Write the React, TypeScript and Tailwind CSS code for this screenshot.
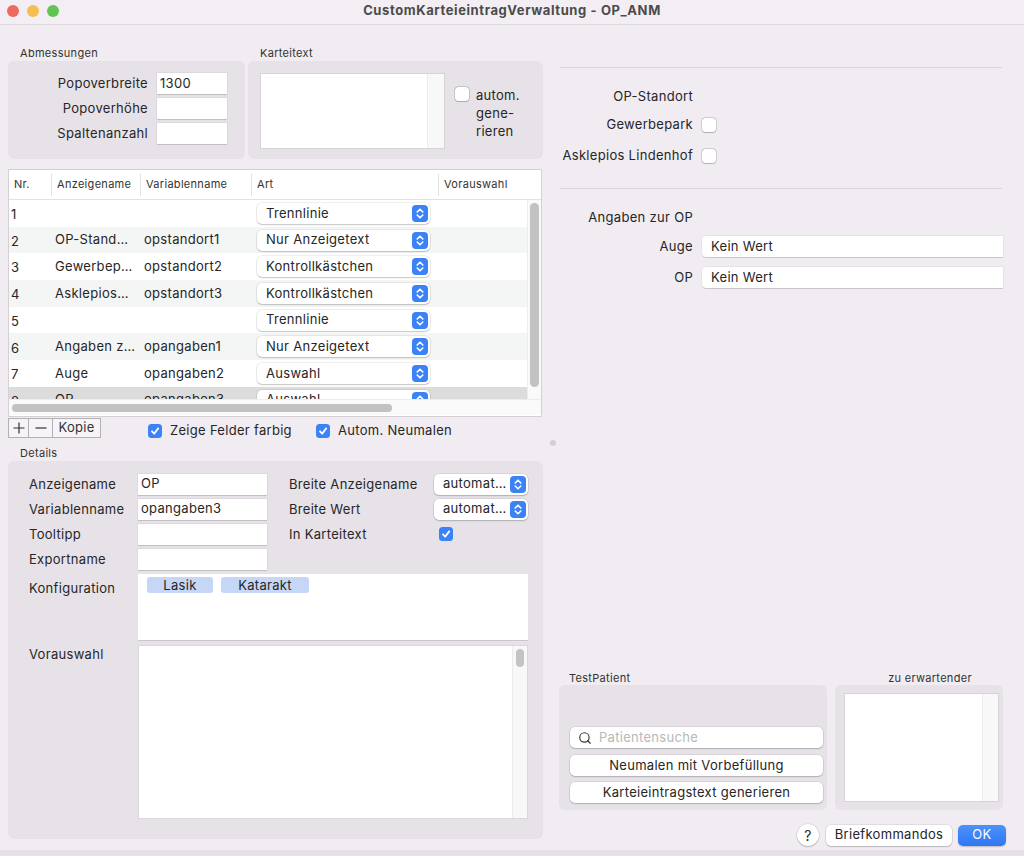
import { Search } from 'lucide-react';

type Row = { nr: string; name: string; variable: string; art: string };

const rows: Row[] = [
  { nr: '1', name: '', variable: '', art: 'Trennlinie' },
  { nr: '2', name: 'OP-Stand…', variable: 'opstandort1', art: 'Nur Anzeigetext' },
  { nr: '3', name: 'Gewerbep…', variable: 'opstandort2', art: 'Kontrollkästchen' },
  { nr: '4', name: 'Asklepios…', variable: 'opstandort3', art: 'Kontrollkästchen' },
  { nr: '5', name: '', variable: '', art: 'Trennlinie' },
  { nr: '6', name: 'Angaben z…', variable: 'opangaben1', art: 'Nur Anzeigetext' },
  { nr: '7', name: 'Auge', variable: 'opangaben2', art: 'Auswahl' },
  { nr: '8', name: 'OP', variable: 'opangaben3', art: 'Auswahl' },
];

function Stepper() {
  return (
    <span className="flex h-[17px] w-[16px] shrink-0 items-center justify-center rounded-[4px] bg-[#3b82f6]">
      <svg width="10" height="13" viewBox="0 0 10 13" fill="none" stroke="white" strokeWidth="1.6" strokeLinecap="round" strokeLinejoin="round">
        <path d="M2.2 5 L5 2.2 L7.8 5" />
        <path d="M2.2 8 L5 10.8 L7.8 8" />
      </svg>
    </span>
  );
}

function Popup({ text, className = '' }: { text: string; className?: string }) {
  return (
    <div className={`flex h-[21px] items-center justify-between rounded-[5px] bg-white pl-[9px] pr-[2px] shadow-[0_0_0_0.5px_rgba(0,0,0,0.12),0_1px_1.5px_rgba(0,0,0,0.18)] ${className}`}>
      <span className="truncate">{text}</span>
      <Stepper />
    </div>
  );
}

function Checkbox({ checked = false }: { checked?: boolean }) {
  if (checked) {
    return (
      <span className="flex h-[14px] w-[14px] shrink-0 items-center justify-center rounded-[3.5px] bg-[#3b82f6]">
        <svg width="10" height="10" viewBox="0 0 10 10" fill="none" stroke="white" strokeWidth="1.8" strokeLinecap="round" strokeLinejoin="round">
          <path d="M2 5.3 L4.2 7.6 L8.2 2.4" />
        </svg>
      </span>
    );
  }
  return <span className="block h-[14px] w-[14px] shrink-0 rounded-[3.5px] bg-white shadow-[0_0_0_0.5px_rgba(0,0,0,0.25),0_0.5px_1px_rgba(0,0,0,0.15)]" />;
}

function Field({ value = '', className = '' }: { value?: string; className?: string }) {
  return (
    <div className={`flex h-[21px] items-center bg-white px-[3px] shadow-[0_0_0_0.5px_rgba(0,0,0,0.08),0_1px_0_rgba(0,0,0,0.12)] ${className}`}>
      {value}
    </div>
  );
}

function Button({ children, className = '' }: { children: React.ReactNode; className?: string }) {
  return (
    <div className={`flex h-[21px] items-center justify-center rounded-[5px] bg-white shadow-[0_0_0_0.5px_rgba(0,0,0,0.12),0_1px_1.5px_rgba(0,0,0,0.18)] ${className}`}>
      {children}
    </div>
  );
}

const cols = 'grid grid-cols-[42px_89px_111px_187px_1fr]';

export default function App() {
  return (
    <div className="flex h-[856px] w-[1024px] flex-col overflow-hidden bg-[#f0ecf1] font-['Inter',sans-serif] text-[13px] tracking-[0.3px] text-[#262626]">
      {/* Title bar */}
      <div className="grid h-[25px] shrink-0 grid-cols-[1fr_auto_1fr] items-center border-b border-[#dcd8dc] bg-[#f2eef3] pb-[3px]">
        <div className="flex gap-[8px] pl-[7px]">
          <span className="h-[12px] w-[12px] rounded-full bg-[#ee6a5f]" />
          <span className="h-[12px] w-[12px] rounded-full bg-[#f5bf4f]" />
          <span className="h-[12px] w-[12px] rounded-full bg-[#61c554]" />
        </div>
        <div className="font-bold tracking-[0.6px] text-[#4b4b4b]">CustomKarteieintragVerwaltung - OP_ANM</div>
        <div />
      </div>

      <div className="flex h-[825px] shrink-0 pl-[8px]">
        {/* Left column */}
        <div className="flex w-[535px] flex-col pt-[21px]">
          <div className="flex h-[14px] text-[11px] leading-[14px] text-[#333]">
            <span className="w-[240px] pl-[12px]">Abmessungen</span>
            <span className="pl-[12px]">Karteitext</span>
          </div>
          <div className="mt-[1px] flex h-[98px] gap-[3px]">
            <div className="flex w-[237px] flex-col gap-[4px] rounded-[6px] bg-[#e6e2e8] pt-[12px]">
              {[
                ['Popoverbreite', '1300'],
                ['Popoverhöhe', ''],
                ['Spaltenanzahl', ''],
              ].map(([label, value]) => (
                <div key={label} className="flex h-[21px] items-center">
                  <span className="w-[140px] text-right">{label}</span>
                  <Field value={value} className="ml-[9px] w-[70px]" />
                </div>
              ))}
            </div>
            <div className="flex w-[295px] rounded-[6px] bg-[#e6e2e8] pl-[12px] pt-[12px]">
              <div className="flex h-[76px] w-[185px] justify-end border border-[#d7d3d7] bg-white">
                <div className="w-[17px] border-l border-[#ececec] bg-[#f8f8f8]" />
              </div>
              <div className="ml-[10px] mt-[14px]">
                <Checkbox />
              </div>
              <div className="ml-[7px] mt-[13px] leading-[18px]">
                autom.
                <br />
                gene-
                <br />
                rieren
              </div>
            </div>
          </div>

          {/* Table */}
          <div className="mt-[10px] flex h-[248px] w-[534px] flex-col border border-[#d4d0d4] bg-white">
            <div className={`${cols} h-[30px] shrink-0 items-center border-b border-[#e3e3e3] text-[11px] text-[#333]`}>
              <span className="pl-[5px]">Nr.</span>
              {['Anzeigename', 'Variablenname', 'Art', 'Vorauswahl'].map((h) => (
                <span key={h} className="flex h-[22px] items-center border-l border-[#e2e2e2] pl-[5px]">
                  {h}
                </span>
              ))}
            </div>
            <div className="flex h-[199px] shrink-0">
              <div className="flex-1 overflow-hidden">
                {rows.map((r, i) => (
                  <div
                    key={r.nr}
                    className={`${cols} h-[26.7px] items-center ${i === 7 ? 'bg-[#dcdcdc]' : i % 2 === 1 ? 'bg-[#f4f5f5]' : 'bg-white'}`}
                  >
                    <span className="pl-[2px] pt-[3px]">{r.nr}</span>
                    <span className="truncate pl-[4px]">{r.name}</span>
                    <span className="pl-[4px]">{r.variable}</span>
                    <span className="pl-[6px] pr-[8px]">
                      <Popup text={r.art} />
                    </span>
                    <span />
                  </div>
                ))}
              </div>
              <div className="flex w-[14px] justify-center border-l border-[#ededed] bg-[#fafafa] pt-[3px]">
                <div className="h-[184px] w-[9px] rounded-full bg-[#c2c2c2]" />
              </div>
            </div>
            <div className="flex h-[16px] items-center border-t border-[#ededed] bg-[#fafafa] pl-[3px]">
              <div className="h-[8px] w-[380px] rounded-full bg-[#c2c2c2]" />
            </div>
          </div>

          {/* Table controls */}
          <div className="mt-[1px] flex h-[19px] items-start">
            <div className="flex h-[20px] border border-[#b4b0b4] bg-[#f6f4f6] text-[#333]">
              <span className="flex w-[19px] items-center justify-center">
                <svg width="12" height="12" viewBox="0 0 12 12" stroke="#333" strokeWidth="1.2">
                  <path d="M6 0.5 V11.5 M0.5 6 H11.5" />
                </svg>
              </span>
              <span className="flex w-[24px] items-center justify-center border-l border-[#b4b0b4]">
                <svg width="12" height="12" viewBox="0 0 12 12" stroke="#333" strokeWidth="1.2">
                  <path d="M0.5 6 H11.5" />
                </svg>
              </span>
              <span className="flex w-[48px] items-center justify-center border-l border-[#b4b0b4]">Kopie</span>
            </div>
            <div className="ml-[47px] mt-[3px] flex w-[168px] items-center gap-[8px]">
              <Checkbox checked />
              <span>Zeige Felder farbig</span>
            </div>
            <div className="mt-[3px] flex items-center gap-[8px]">
              <Checkbox checked />
              <span>Autom. Neumalen</span>
            </div>
          </div>

          {/* Details */}
          <div className="mt-[9px] h-[14px] pl-[12px] text-[11px] leading-[14px] text-[#333]">Details</div>
          <div className="mt-[1px] h-[378px] rounded-[6px] bg-[#e6e2e8] pl-[21px] pt-[13px]">
            <div className="flex flex-col gap-[5px]">
              <div className="flex h-[20px] items-center">
                <span className="w-[109px] pt-[2px]">Anzeigename</span>
                <Field value="OP" className="h-[20px] w-[129px]" />
                <span className="ml-[22px] w-[145px] pt-[2px]">Breite Anzeigename</span>
                <Popup text="automat…" className="h-[20px] w-[94px]" />
              </div>
              <div className="flex h-[20px] items-center">
                <span className="w-[109px] pt-[2px]">Variablenname</span>
                <Field value="opangaben3" className="h-[20px] w-[129px]" />
                <span className="ml-[22px] w-[145px] pt-[2px]">Breite Wert</span>
                <Popup text="automat…" className="h-[20px] w-[94px]" />
              </div>
              <div className="flex h-[20px] items-center">
                <span className="w-[109px] pt-[2px]">Tooltipp</span>
                <Field className="h-[20px] w-[129px]" />
                <span className="ml-[22px] w-[145px] pt-[2px]">In Karteitext</span>
                <span className="ml-[5px]">
                  <Checkbox checked />
                </span>
              </div>
              <div className="flex h-[20px] items-center">
                <span className="w-[109px] pt-[2px]">Exportname</span>
                <Field className="h-[20px] w-[129px]" />
              </div>
            </div>
            <div className="mt-[5px] flex">
              <span className="w-[109px] pt-[5px]">Konfiguration</span>
              <div className="flex h-[66px] w-[390px] items-start gap-[8px] bg-white pl-[9px] pt-[3px] shadow-[0_1px_0_rgba(0,0,0,0.12)]">
                <span className="h-[16px] w-[66px] rounded-[3px] bg-[#c5d6f6] text-center leading-[16px]">Lasik</span>
                <span className="h-[16px] w-[88px] rounded-[3px] bg-[#c5d6f6] text-center leading-[16px]">Katarakt</span>
              </div>
            </div>
            <div className="mt-[5px] flex">
              <span className="w-[109px]">Vorauswahl</span>
              <div className="flex h-[174px] w-[390px] justify-end border border-[#dad6da] bg-white">
                <div className="flex w-[15px] justify-center border-l border-[#ececec] bg-[#f8f8f8] pt-[3px]">
                  <div className="h-[18px] w-[8px] rounded-full bg-[#c4c4c4]" />
                </div>
              </div>
            </div>
          </div>
        </div>

        {/* Split divider */}
        <div className="w-[16px] pl-[7px] pt-[415px]">
          <span className="block h-[6px] w-[6px] rounded-full bg-[#d3cfd4]" />
        </div>

        {/* Right column */}
        <div className="flex w-[444px] flex-col">
          <div className="ml-[1px] mt-[42px] h-px w-[442px] bg-[#d9d5da]" />
          <div className="mt-[19px] flex h-[20px] items-center">
            <span className="w-[134px] text-right">OP-Standort</span>
          </div>
          <div className="mt-[8px] flex h-[20px] items-center">
            <span className="w-[134px] text-right">Gewerbepark</span>
            <span className="ml-[9px]">
              <Checkbox />
            </span>
          </div>
          <div className="mt-[11px] flex h-[20px] items-center">
            <span className="w-[134px] whitespace-nowrap text-right">Asklepios Lindenhof</span>
            <span className="ml-[9px]">
              <Checkbox />
            </span>
          </div>
          <div className="ml-[1px] mt-[22px] h-px w-[442px] bg-[#d9d5da]" />
          <div className="mt-[19px] flex h-[20px] items-center">
            <span className="w-[134px] text-right">Angaben zur OP</span>
          </div>
          <div className="mt-[8px] flex h-[21px] items-center">
            <span className="w-[134px] text-right">Auge</span>
            <Field value="Kein Wert" className="ml-[9px] flex-1 rounded-l-[4px] pl-[9px]" />
          </div>
          <div className="mt-[10px] flex h-[21px] items-center">
            <span className="w-[134px] text-right">OP</span>
            <Field value="Kein Wert" className="ml-[9px] flex-1 rounded-l-[4px] pl-[9px]" />
          </div>

          {/* Test patient */}
          <div className="mt-auto flex h-[14px] text-[11px] leading-[14px] text-[#333]">
            <span className="w-[276px] pl-[10px]">TestPatient</span>
            <span className="flex-1 pl-[22px] text-center">zu erwartender</span>
          </div>
          <div className="flex h-[125px] gap-[8px]">
            <div className="flex w-[268px] flex-col rounded-[6px] bg-[#e6e2e8] pl-[11px] pt-[42px]">
              <div className="flex h-[21px] w-[253px] items-center rounded-[5px] bg-white pl-[8px] shadow-[0_0_0_0.5px_rgba(0,0,0,0.12),0_1px_1.5px_rgba(0,0,0,0.18)]">
                <Search size={14} strokeWidth={2} className="text-[#3a3a3a]" />
                <span className="ml-[7px] text-[#b8b8b8]">Patientensuche</span>
              </div>
              <Button className="mt-[7px] w-[253px]">Neumalen mit Vorbefüllung</Button>
              <Button className="mt-[6px] w-[253px]">Karteieintragstext generieren</Button>
            </div>
            <div className="w-[168px] rounded-[6px] bg-[#e6e2e8] px-[9px] pt-[8px]">
              <div className="flex h-[109px] w-[155px] justify-end border border-[#d7d3d7] bg-white">
                <div className="w-[16px] border-l border-[#ececec] bg-[#f8f8f8]" />
              </div>
            </div>
          </div>
          <div className="-mr-[3px] mt-[14px] flex h-[22px] items-center justify-end">
            <div className="flex h-[22px] w-[22px] items-center justify-center rounded-full bg-white text-[14px] shadow-[0_0_0_0.5px_rgba(0,0,0,0.12),0_1px_1.5px_rgba(0,0,0,0.2)]">
              ?
            </div>
            <Button className="ml-[7px] w-[126px]">Briefkommandos</Button>
            <div className="ml-[6px] flex h-[21px] w-[48px] items-center justify-center rounded-[5px] bg-gradient-to-b from-[#4c92f8] to-[#2f76f5] text-white shadow-[0_1px_1.5px_rgba(0,0,0,0.2)]">
              OK
            </div>
          </div>
          <div className="h-[4px] shrink-0" />
        </div>
      </div>
      <div className="h-[6px] shrink-0 bg-[#e4e0e6]" />
    </div>
  );
}
